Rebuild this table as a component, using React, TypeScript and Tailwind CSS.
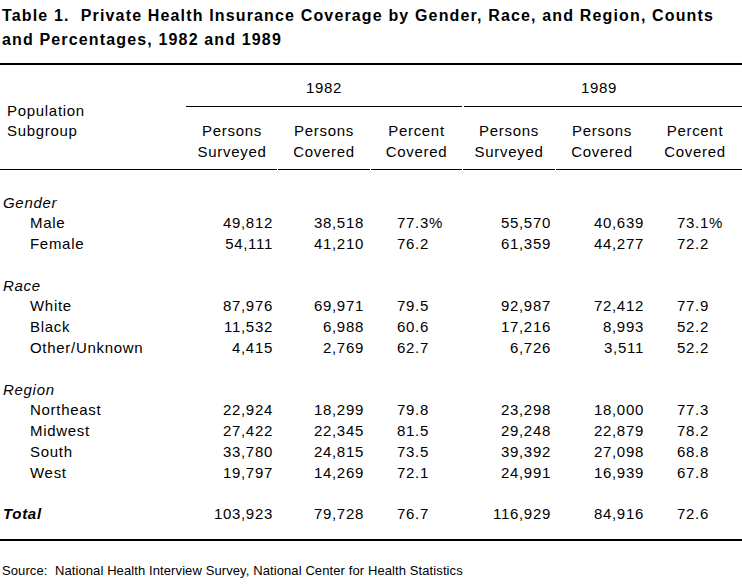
type Row =
    | { kind: "group"; label: string }
    | { kind: "item"; label: string; values: string[] }
    | { kind: "blank" }
    | { kind: "total"; label: string; values: string[] }

const rows: Row[] = [
    { kind: "group", label: "Gender" },
    { kind: "item", label: "Male", values: ["49,812", "38,518", "77.3%", "55,570", "40,639", "73.1%"] },
    { kind: "item", label: "Female", values: ["54,111", "41,210", "76.2", "61,359", "44,277", "72.2"] },
    { kind: "blank" },
    { kind: "group", label: "Race" },
    { kind: "item", label: "White", values: ["87,976", "69,971", "79.5", "92,987", "72,412", "77.9"] },
    { kind: "item", label: "Black", values: ["11,532", "6,988", "60.6", "17,216", "8,993", "52.2"] },
    { kind: "item", label: "Other/Unknown", values: ["4,415", "2,769", "62.7", "6,726", "3,511", "52.2"] },
    { kind: "blank" },
    { kind: "group", label: "Region" },
    { kind: "item", label: "Northeast", values: ["22,924", "18,299", "79.8", "23,298", "18,000", "77.3"] },
    { kind: "item", label: "Midwest", values: ["27,422", "22,345", "81.5", "29,248", "22,879", "78.2"] },
    { kind: "item", label: "South", values: ["33,780", "24,815", "73.5", "39,392", "27,098", "68.8"] },
    { kind: "item", label: "West", values: ["19,797", "14,269", "72.1", "24,991", "16,939", "67.8"] },
    { kind: "blank" },
    { kind: "total", label: "Total", values: ["103,923", "79,728", "76.7", "116,929", "84,916", "72.6"] },
]

const GRID = "grid grid-cols-[187px_91px_93px_92px_93px_92px_94px]"

// per-column alignment of the numbers
const valueCell = [
    "text-right pr-[5px]",
    "text-right pr-[7px]",
    "text-left pl-[26px]",
    "text-right pr-[5px]",
    "text-right pr-[4px]",
    "text-left pl-[29px]",
]

function Values({ values }: { values: string[] }) {
    return (
        <>
            {values.map((v, i) => (
                <span key={i} className={valueCell[i]}>
                    {v}
                </span>
            ))}
        </>
    )
}

function ColHead({ top, bottom, col, gap }: { top: string; bottom: string; col: string; gap?: boolean }) {
    return (
        <div className={`${col} row-start-2 border-b border-black pt-[13px] pb-[7px] text-center leading-[21px] ${gap ? "mr-px" : ""}`}>
            <div>{top}</div>
            <div>{bottom}</div>
        </div>
    )
}

export default function App() {
    return (
        <div className="w-[742px] h-[585px] bg-white text-black font-['Liberation_Sans',Arial,sans-serif] text-[15px] tracking-[0.7px] overflow-hidden">
            {/* Title */}
            <h1 className="pt-[4px] pl-[2px] text-[16px] font-bold leading-[24px] tracking-[1.15px] whitespace-pre">
                {"Table 1.  Private Health Insurance Coverage by Gender, Race, and Region, Counts\nand Percentages, 1982 and 1989"}
            </h1>

            <div className="mt-[11px] h-[2px] bg-black" />

            {/* Header */}
            <div className={`${GRID} grid-rows-[42px_63px]`}>
                <div className="col-start-1 row-start-1 row-span-2 border-b border-black pt-[36px] pl-[7px] leading-[20px]">
                    <div>Population</div>
                    <div>Subgroup</div>
                </div>
                <div className="col-start-2 col-span-3 row-start-1 -ml-px mr-px border-b border-black pt-[12px] text-center leading-[21px]">
                    1982
                </div>
                <div className="col-start-5 col-span-3 row-start-1 ml-px border-b border-black pt-[12px] pr-[8px] text-center leading-[21px]">
                    1989
                </div>
                <ColHead col="col-start-2" top="Persons" bottom="Surveyed" gap />
                <ColHead col="col-start-3" top="Persons" bottom="Covered" gap />
                <ColHead col="col-start-4" top="Percent" bottom="Covered" gap />
                <ColHead col="col-start-5" top="Persons" bottom="Surveyed" gap />
                <ColHead col="col-start-6" top="Persons" bottom="Covered" />
                <ColHead col="col-start-7" top="Percent" bottom="Covered" />
            </div>

            {/* Body */}
            <div className="pt-[21.5px]">
                {rows.map((row, i) => {
                    if (row.kind === "blank") return <div key={i} className="h-[20.8px]" />
                    if (row.kind === "group")
                        return (
                            <div key={i} className={`${GRID} h-[20.8px] items-center`}>
                                <span className="pl-[3px] italic">{row.label}</span>
                            </div>
                        )
                    return (
                        <div key={i} className={`${GRID} h-[20.8px] items-center`}>
                            {row.kind === "total" ? (
                                <span className="pl-[3px] italic font-bold">{row.label}</span>
                            ) : (
                                <span className="pl-[30px]">{row.label}</span>
                            )}
                            <Values values={row.values} />
                        </div>
                    )
                })}
            </div>

            <div className="mt-[15px] h-[2px] bg-black" />

            {/* Source */}
            <p className="mt-[22px] pl-[2px] text-[13px] leading-[16px] tracking-[0.1px] whitespace-pre">
                {"Source:  National Health Interview Survey, National Center for Health Statistics"}
            </p>
        </div>
    )
}
